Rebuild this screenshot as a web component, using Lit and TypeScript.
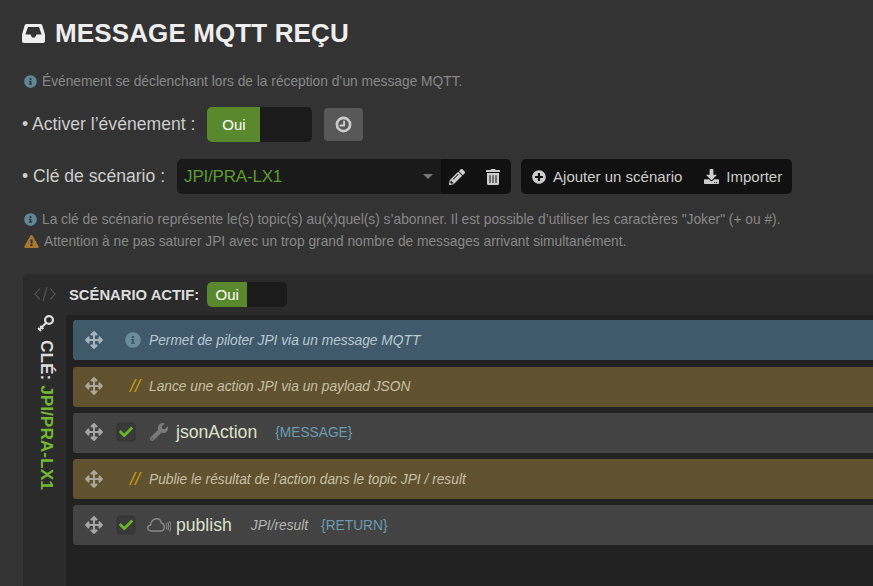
import { LitElement, html, css } from "lit";
import { customElement } from "lit/decorators.js";

const ic = (vb: string, d: string, cls: string) =>
  html`<svg class="ic ${cls}" viewBox="${vb}" fill="currentColor" fill-rule="evenodd"><path d="${d}"></path></svg>`;

const INFO = "M256 8C119.043 8 8 119.083 8 256c0 136.997 111.043 248 248 248s248-111.003 248-248C504 119.083 392.957 8 256 8zm0 110c23.196 0 42 18.804 42 42s-18.804 42-42 42-42-18.804-42-42 18.804-42 42-42zm56 254c0 6.627-5.373 12-12 12h-88c-6.627 0-12-5.373-12-12v-24c0-6.627 5.373-12 12-12h12v-64h-12c-6.627 0-12-5.373-12-12v-24c0-6.627 5.373-12 12-12h64c6.627 0 12 5.373 12 12v100h12c6.627 0 12 5.373 12 12v24z";
const MOVE = "M352.201 425.775l-79.196 79.196c-9.373 9.373-24.568 9.373-33.941 0l-79.196-79.196c-15.119-15.119-4.411-40.971 16.971-40.97h51.162L228 284H127.196v51.162c0 21.382-25.851 32.09-40.971 16.971L7.029 272.937c-9.373-9.373-9.373-24.569 0-33.941L86.225 159.8c15.119-15.119 40.971-4.411 40.971 16.971V228H228V127.196h-51.23c-21.382 0-32.09-25.851-16.971-40.971l79.196-79.196c9.373-9.373 24.568-9.373 33.941 0l79.196 79.196c15.119 15.119 4.411 40.971-16.971 40.971h-51.162V228h100.804v-51.162c0-21.382 25.851-32.09 40.97-16.971l79.196 79.196c9.373 9.373 9.373 24.569 0 33.941L425.773 352.2c-15.119 15.119-40.971 4.411-40.97-16.971V284H284v100.804h51.23c21.382 0 32.09 25.851 16.971 40.971z";
const CHECK = "M173.898 439.404l-166.4-166.4c-9.997-9.997-9.997-26.206 0-36.204l36.203-36.204c9.997-9.998 26.207-9.998 36.204 0L192 312.69 432.095 72.596c9.997-9.997 26.207-9.997 36.204 0l36.203 36.204c9.997 9.997 9.997 26.206 0 36.204l-294.4 294.401c-9.998 9.997-26.207 9.997-36.204-.001z";
const WRENCH = "M507.73 109.1c-2.24-9.03-13.54-12.09-20.12-5.51l-74.36 74.36-67.88-11.31-11.31-67.88 74.36-74.36c6.62-6.62 3.43-17.9-5.66-20.16-47.38-11.74-99.55.91-136.58 37.93-39.64 39.64-50.55 97.1-34.05 147.2L18.74 402.76c-24.99 24.99-24.99 65.51 0 90.5 24.99 24.99 65.51 24.99 90.5 0l213.21-213.21c50.12 16.71 107.47 5.68 147.37-34.22 37.07-37.07 49.7-89.32 37.91-136.73zM64 472c-13.25 0-24-10.75-24-24 0-13.26 10.75-24 24-24s24 10.74 24 24c0 13.25-10.75 24-24 24z";
const INBOX = "M4.6 0h13.800c.9 0 1.500.4 1.900 1.200L23 10.500V17c0 1.200-.8 2-2 2H2c-1.200 0-2-.8-2-2v-6.500L2.700 1.200C3.100.4 3.700 0 4.600 0zM6 3 3.400 10.500h5.100l1.500 3h3l1.500-3h5.100L17 3z";
const PENCIL = "M497.9 142.1l-46.1 46.1c-4.7 4.7-12.3 4.7-17 0l-111-111c-4.7-4.7-4.7-12.3 0-17l46.1-46.1c18.7-18.7 49.1-18.7 67.9 0l60.1 60.1c18.8 18.7 18.8 49.1 0 67.9zM284.2 99.8L21.6 362.4.4 483.9c-2.9 16.4 11.4 30.6 27.8 27.8l121.5-21.3 262.6-262.6c4.7-4.7 4.7-12.3 0-17l-111-111c-4.8-4.7-12.4-4.7-17.1 0zM124.1 339.9c-5.5-5.5-5.5-14.3 0-19.8l154-154c5.5-5.5 14.3-5.5 19.8 0s5.5 14.3 0 19.8l-154 154c-5.5 5.5-14.3 5.5-19.8 0zM88 424h48v36.3l-64.5 11.3-31.1-31.1L51.7 376H88v48z";
const TRASH = "M32 464a48 48 0 0 0 48 48h288a48 48 0 0 0 48-48V128H32zm272-256a16 16 0 0 1 32 0v224a16 16 0 0 1-32 0zm-96 0a16 16 0 0 1 32 0v224a16 16 0 0 1-32 0zm-96 0a16 16 0 0 1 32 0v224a16 16 0 0 1-32 0zM432 32H312l-9.4-18.7A24 24 0 0 0 281.1 0H166.8a23.72 23.72 0 0 0-21.4 13.3L136 32H16A16 16 0 0 0 0 48v32a16 16 0 0 0 16 16h416a16 16 0 0 0 16-16V48a16 16 0 0 0-16-16z";
const PLUS = "M256 8C119 8 8 119 8 256s111 248 248 248 248-111 248-248S393 8 256 8zm144 276c0 6.6-5.4 12-12 12h-92v92c0 6.6-5.4 12-12 12h-56c-6.6 0-12-5.4-12-12v-92h-92c-6.6 0-12-5.4-12-12v-56c0-6.6 5.4-12 12-12h92v-92c0-6.6 5.4-12 12-12h56c6.6 0 12 5.4 12 12v92h92c6.6 0 12 5.4 12 12v56z";
const DOWNLOAD = "M216 0h80c13.3 0 24 10.7 24 24v168h87.7c17.8 0 26.7 21.5 14.1 34.1L269.7 378.3c-7.5 7.5-19.8 7.5-27.3 0L90.1 226.1c-12.6-12.6-3.7-34.1 14.1-34.1H192V24c0-13.3 10.7-24 24-24zm296 376v112c0 13.3-10.7 24-24 24H24c-13.3 0-24-10.7-24-24V376c0-13.3 10.7-24 24-24h146.7l49 49c20.1 20.1 52.5 20.1 72.6 0l49-49H488c13.3 0 24 10.7 24 24zm-124 88c0-11-9-20-20-20s-20 9-20 20 9 20 20 20 20-9 20-20zm64 0c0-11-9-20-20-20s-20 9-20 20 9 20 20 20 20-9 20-20z";
const WARN = "M569.517 440.013C587.975 472.007 564.806 512 527.94 512H48.054c-36.937 0-59.999-40.055-41.577-71.987L246.423 24.035c18.467-32.009 64.72-31.951 83.154 0l239.94 416.028zM288 354c-25.405 0-46 20.595-46 46s20.595 46 46 46 46-20.595 46-46-20.595-46-46-46zm-43.673-165.346l7.418 136c.347 6.364 5.609 11.346 11.982 11.346h48.546c6.373 0 11.635-4.982 11.982-11.346l7.418-136c.375-6.874-5.098-12.654-11.982-12.654h-63.383c-6.884 0-12.356 5.78-11.981 12.654z";

const clockIcon = html`<svg class="clock" viewBox="0 0 18 18" fill="none" stroke="currentColor"><circle cx="9" cy="9" r="7" stroke-width="2.8"></circle><path d="M9.600 5v5H5" stroke-width="2"></path></svg>`;
const codeIcon = html`<svg class="code" viewBox="0 0 22 16" fill="none" stroke="currentColor" stroke-width="1.1"><path d="M6 2.500 1 8l5 5.500M16 2.500 21 8l-5 5.500M13 .8 9 15.200"></path></svg>`;
const keyIcon = html`<svg class="key" viewBox="0 0 18 18" fill="none" stroke="currentColor"><circle cx="12" cy="6" r="3.900" stroke-width="2.200"></circle><path d="M9 9 2 16" stroke-width="2.200"></path><path d="M3.200 11.800 6.400 15M1 14l3 3" stroke-width="1.800"></path></svg>`;
const cloudIcon = html`<svg class="cloud" viewBox="0 0 24 14" fill="none" stroke="currentColor" stroke-linecap="round"><path d="M4 13C2 13 .7 11.600.7 10 .7 8.400 2 7.200 3.400 7.200 3.800 3.400 6.600.8 9.500.8c2.700 0 4.500 1.800 4.900 4.200 1.800.4 2.800 2 2.800 4 0 2.400-1.400 4-3.200 4z" stroke-width="1.400"></path><path d="M19.200 5.500c.8 1.800.8 3.700 0 5.500M21 4.500c1.100 2.400 1.100 5.100 0 7.500M22.800 3.500c1.400 3 1.400 6.500 0 9.500" stroke-width="1.100"></path></svg>`;

const move = () => ic("0 0 512 512", MOVE, "move");
const check = () => html`<span class="chk">${ic("0 0 512 512", CHECK, "tick")}</span>`;

@customElement("app-root")
export class AppRoot extends LitElement {
  static styles = css`
    :host { display: block; width: 100%; height: 586px; overflow: hidden; background: #333; font-family: "Liberation Sans", Arial, sans-serif; color: #ccc; }
    .ic { display: block; flex: none; }
    .page { padding: 15px 0 0 22px; display: flex; flex-direction: column; height: 571px; }
    h1 { margin: 0; display: flex; align-items: center; gap: 10px; height: 36px; font-size: 26px; font-weight: 700; letter-spacing: 0.12px; color: #eee; white-space: nowrap; }
    .inbox { width: 23px; height: 19px; }
    .note { display: flex; align-items: center; gap: 5px; font-size: 13.75px; color: #888; height: 22px; white-space: nowrap; }
    .first { margin-top: 19px; }
    .note .i { width: 13px; height: 13px; color: #5f8798; margin-left: 2px; }
    .note .w { width: 15px; height: 13px; color: #a9762f; margin-left: 2px; }
    .field { display: flex; align-items: center; font-size: 17.6px; color: #ccc; white-space: nowrap; }
    .f1 { margin-top: 15px; height: 35px; }
    .f2 { margin-top: 17px; height: 35px; }
    .tog { display: flex; width: 105px; height: 35px; margin-left: 12px; background: #1b1b1b; border-radius: 5px; overflow: hidden; }
    .tog b { width: 53px; background: #5a892d; color: #fff; font-weight: 400; font-size: 15px; display: flex; align-items: center; justify-content: center; }
    .clockbtn { width: 39px; height: 33px; margin-left: 12px; background: #585858; border-radius: 4px; display: flex; align-items: center; justify-content: center; color: #ccc; }
    .clock { width: 17px; height: 17px; display: block; }
    .sel { margin-left: 12px; width: 264px; height: 35px; background: #1a1a1a; border-radius: 5px 0 0 5px; display: flex; align-items: center; justify-content: space-between; padding: 0 8px 0 7px; box-sizing: border-box; color: #5f9a2e; font-size: 17px; letter-spacing: -0.2px; }
    .caret { width: 0; height: 0; border: 5px solid transparent; border-top: 5px solid #777; border-bottom: 0; }
    .acts { width: 70px; height: 35px; background: #111; border-radius: 0 5px 5px 0; display: flex; align-items: center; gap: 21px; padding-left: 8px; box-sizing: border-box; color: #ccc; }
    .pen { width: 16px; height: 16px; }
    .tr { width: 14px; height: 16px; }
    .group { margin-left: 10px; width: 271px; height: 35px; background: #111; border-radius: 5px; display: flex; align-items: center; padding-left: 11px; box-sizing: border-box; font-size: 15px; color: #ccc; }
    .pl { width: 14px; height: 14px; margin-right: 7px; }
    .dl { width: 15px; height: 15px; margin-left: 22px; margin-right: 7px; }
    .hints { margin-top: 14px; }
    .card { margin-top: 22px; margin-left: 1px; flex: 1; background: #2b2b2b; border-radius: 6px 0 0 0; display: grid; grid-template-columns: 43px 1fr; grid-template-rows: 41px 1fr; min-height: 0; }
    .codecell { display: flex; align-items: center; justify-content: center; color: #5a5a5a; padding-bottom: 1px; }
    .code { width: 22px; height: 16px; display: block; margin-bottom: 1px; }
    .head { display: flex; align-items: center; font-size: 14.8px; font-weight: 700; color: #ddd; white-space: nowrap; padding-left: 3px; }
    .mini { display: flex; width: 80px; height: 25px; margin-left: 8px; background: #1b1b1b; border-radius: 5px; overflow: hidden; }
    .mini b { width: 40px; background: #5a892d; color: #fff; font-weight: 400; font-size: 15px; display: flex; align-items: center; justify-content: center; }
    .side { display: flex; flex-direction: column; align-items: center; color: #ddd; }
    .key { width: 18px; height: 18px; display: block; margin-top: -1px; margin-left: 2px; }
    .vert { writing-mode: vertical-rl; font-size: 17.3px; font-weight: 700; white-space: nowrap; margin-top: 8px; margin-left: 3px; }
    .vert span { color: #74b733; }
    .list { background: #222; padding: 5px 0 0 7px; display: flex; flex-direction: column; overflow: hidden; }
    .row { height: 40px; flex: none; box-sizing: border-box; border-radius: 3px 0 0 3px; display: flex; align-items: center; padding-left: 12px; white-space: nowrap; font-size: 13.75px; margin-bottom: 6px; }
    .row.gap7 { margin-bottom: 7px; }
    .row.up { padding-bottom: 2px; }
    .move { width: 18px; height: 18px; color: #a6a6a6; margin-right: 22px; }
    .info { background: #40596b; color: #b9cad3; font-style: italic; }
    .info .move { color: #a7b3ba; }
    .info .ii { width: 16px; height: 16px; color: #6c8b9b; margin-right: 8px; }
    .com { background: #60522f; color: #c6c0a6; font-style: italic; }
    .com .move { color: #aaa79a; margin-right: 27px; }
    .sl { color: #c89a16; width: 19px; font-size: 18px; }
    .act { background: #434343; color: #aaa; }
    .act .move { margin-right: 13px; }
    .chk { width: 20px; height: 20px; background: #3a3a3a; border: 1px solid #3c3c3c; box-sizing: border-box; border-radius: 4px; display: flex; align-items: center; justify-content: center; box-shadow: inset 0 0 3px #2c2c2c; }
    .tick { width: 14px; height: 14px; color: #6cb32a; }
    .wr { width: 18px; height: 18px; color: #7a7a7a; margin-left: 14px; margin-right: 8px; }
    .cloud { width: 24px; height: 14px; color: #888; margin-left: 11px; margin-right: 5px; display: block; flex: none; }
    .name { font-size: 17.6px; color: #dde2c9; }
    .m1 { color: #6b9cb1; margin-left: 18px; }
    .p1 { font-style: italic; color: #b5b5b5; margin-left: 19px; }
    .p2 { color: #6b9cb1; margin-left: 13px; }
  `;

  render() {
    return html`<div class="page">
      <h1>${ic("0 0 23 19", INBOX, "inbox")}<span>MESSAGE MQTT REÇU</span></h1>
      <div class="note first">${ic("0 0 512 512", INFO, "i")}Événement se déclenchant lors de la réception d’un message MQTT.</div>
      <div class="field f1">• Activer l’événement :
        <div class="tog"><b>Oui</b></div>
        <div class="clockbtn">${clockIcon}</div>
      </div>
      <div class="field f2">• Clé de scénario :
        <div class="sel">JPI/PRA-LX1<i class="caret"></i></div>
        <div class="acts">${ic("0 0 512 512", PENCIL, "pen")}${ic("0 0 448 512", TRASH, "tr")}</div>
        <div class="group">${ic("0 0 512 512", PLUS, "pl")}Ajouter un scénario${ic("0 0 512 512", DOWNLOAD, "dl")}Importer</div>
      </div>
      <div class="hints">
        <div class="note">${ic("0 0 512 512", INFO, "i")}La clé de scénario représente le(s) topic(s) au(x)quel(s) s’abonner. Il est possible d’utiliser les caractères "Joker" (+ ou #).</div>
        <div class="note">${ic("0 0 576 512", WARN, "w")}Attention à ne pas saturer JPI avec un trop grand nombre de messages arrivant simultanément.</div>
      </div>
      <div class="card">
        <div class="codecell">${codeIcon}</div>
        <div class="head">SCÉNARIO ACTIF:<div class="mini"><b>Oui</b></div></div>
        <div class="side">${keyIcon}<div class="vert">CLÉ: <span>JPI/PRA-LX1</span></div></div>
        <div class="list">
          <div class="row info gap7">${move()}${ic("0 0 512 512", INFO, "ii")}Permet de piloter JPI via un message MQTT</div>
          <div class="row com up">${move()}<span class="sl">//</span>Lance une action JPI via un payload JSON</div>
          <div class="row act up">${move()}${check()}${ic("0 0 512 512", WRENCH, "wr")}<span class="name">jsonAction</span><span class="m1">{MESSAGE}</span></div>
          <div class="row com">${move()}<span class="sl">//</span>Publie le résultat de l'action dans le topic JPI / result</div>
          <div class="row act">${move()}${check()}${cloudIcon}<span class="name">publish</span><span class="p1">JPI/result</span><span class="p2">{RETURN}</span></div>
        </div>
      </div>
    </div>`;
  }
}
